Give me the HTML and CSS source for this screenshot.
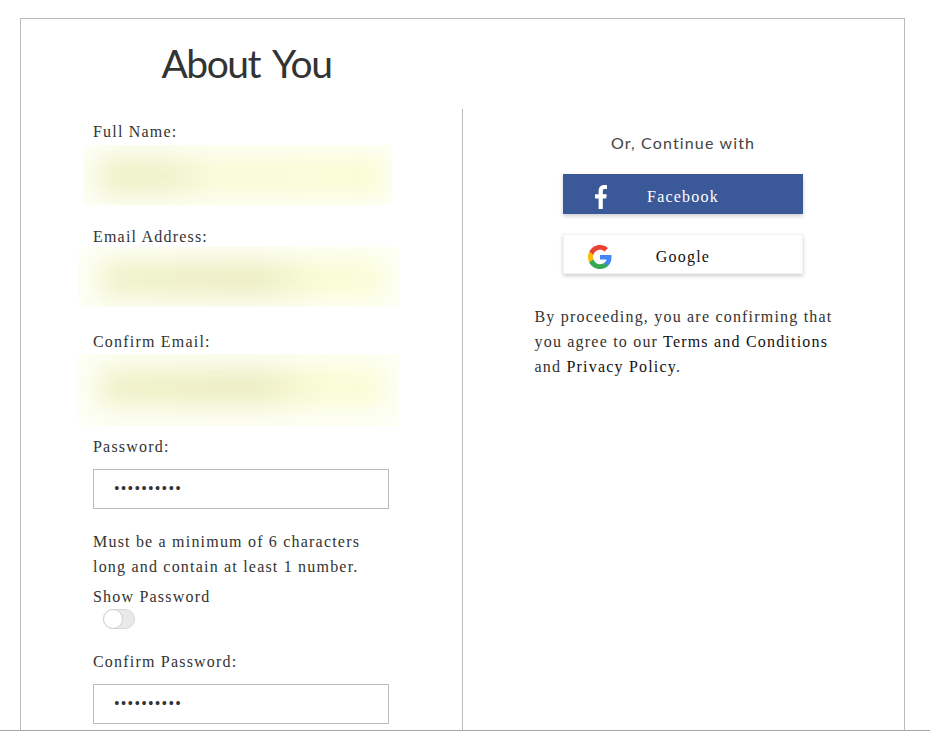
FILE: index.html
```html
<!DOCTYPE html>
<html lang="en">
<head>
    <meta charset="UTF-8">
    <meta name="viewport" content="width=device-width, initial-scale=1.0">
    <title>About You</title>
    <link rel="stylesheet" href="styles.css">
</head>
<body>
    <div class="page">
        <div class="frame">
            <div class="header">
                <h1>About You</h1>
            </div>
            <div class="columns">
                <form class="col-left">
                    <div class="field">
                        <label>Full Name:</label>
                        <div class="slot">
                            <div class="patch patch-name"><div class="smear"></div></div>
                        </div>
                    </div>
                    <div class="field">
                        <label>Email Address:</label>
                        <div class="slot">
                            <div class="patch patch-email"><div class="smear"></div></div>
                        </div>
                    </div>
                    <div class="field">
                        <label>Confirm Email:</label>
                        <div class="slot">
                            <div class="patch patch-confirm"><div class="smear"></div></div>
                        </div>
                    </div>
                    <div class="field field-tight">
                        <label for="password">Password:</label>
                        <input type="password" id="password" value="1234567890">
                    </div>
                    <p class="hint">Must be a minimum of 6 characters long and contain at least 1 number.</p>
                    <div class="show-password">
                        <span class="show-label">Show Password</span>
                        <span class="toggle"><span class="knob"></span></span>
                    </div>
                    <div class="field">
                        <label for="confirm-password">Confirm Password:</label>
                        <input type="password" id="confirm-password" value="1234567890">
                    </div>
                </form>
                <div class="col-right">
                    <p class="or">Or, Continue with</p>
                    <a class="social facebook" href="#">
                        <svg class="fb-icon" viewBox="0 0 12 24" width="12" height="24"><path fill="#fff" d="M3.6 24V13.4H0V9.2h3.6V6.1C3.6 2.3 5.8 0 9.2 0c1.3 0 2.3.1 2.8.2v3.9H9.8c-1.7 0-2 .9-2 2.1v3h4l-.6 4.2H7.8V24z"/></svg>
                        Facebook
                    </a>
                    <a class="social google" href="#">
                        <svg class="g-icon" viewBox="0 0 24 24" width="24" height="24">
                            <path fill="#4285F4" d="M23.5 12.3c0-.9-.1-1.700-.2-2.400H12v4.600h6.500c-.3 1.500-1.100 2.700-2.400 3.600v3h3.900c2.200-2.100 3.500-5.100 3.500-8.800z"/>
                            <path fill="#34A853" d="M12 24c3.200 0 6-1.100 8-2.900l-3.900-3c-1.100.7-2.500 1.200-4.100 1.200-3.100 0-5.800-2.100-6.700-5H1.300v3.100C3.300 21.300 7.300 24 12 24z"/>
                            <path fill="#FBBC05" d="M5.300 14.300c-.3-.7-.4-1.500-.4-2.300s.1-1.600.4-2.300V6.600H1.300C.5 8.200 0 10 0 12s.5 3.800 1.300 5.400z"/>
                            <path fill="#EA4335" d="M12 4.800c1.800 0 3.300.6 4.600 1.800l3.400-3.400C18 1.200 15.200 0 12 0 7.300 0 3.300 2.700 1.300 6.600l4 3.100c.9-2.800 3.600-4.900 6.700-4.900z"/>
                        </svg>
                        Google
                    </a>
                    <p class="terms">By proceeding, you are confirming that you agree to our <a href="#">Terms and Conditions</a> and <a href="#">Privacy Policy</a>.</p>
                </div>
            </div>
        </div>
    </div>
</body>
</html>
```

FILE: styles.css
```css
html, body {
    margin: 0;
    padding: 0;
    background: #fff;
}
body {
    font-family: 'Liberation Serif', 'Times New Roman', serif;
    font-size: 16px;
    line-height: 25px;
    letter-spacing: 1.2px;
    color: #333;
}
.page {
    box-sizing: border-box;
    height: 731px;
    padding: 18px 25px 0 20px;
    border-bottom: 1px solid #a3a7ad;
    overflow: hidden;
}
.frame {
    border: 1px solid #bbb;
    border-bottom: none;
}
.header {
    box-sizing: border-box;
    width: 441px;
    height: 90px;
    padding: 19px 0 0 10px;
    text-align: center;
}
h1 {
    margin: 0;
    font-family: 'Lato', sans-serif;
    font-size: 39px;
    line-height: 50px;
    font-weight: 400;
    letter-spacing: -1.5px;
    word-spacing: 5px;
    color: #333;
}
.columns {
    display: flex;
}
.col-left {
    box-sizing: border-box;
    width: 442px;
    padding: 10px 0 30px 72px;
    border-right: 1px solid #bbb;
}
.col-right {
    flex: 1;
    display: flex;
    flex-direction: column;
    align-items: center;
    padding: 21px 1px 0 0;
}
.field {
    margin-bottom: 30px;
}
.field-tight {
    margin-bottom: 20px;
}
label {
    display: block;
    margin-bottom: 10px;
}
.slot {
    position: relative;
    width: 296px;
    height: 40px;
}
input {
    display: block;
    box-sizing: border-box;
    width: 296px;
    height: 40px;
    padding: 0 20px;
    border: 1px solid #bbb;
    border-radius: 0;
    outline: none;
    font-family: 'Liberation Serif', serif;
    font-size: 16px;
    letter-spacing: 1.2px;
    color: #333;
}
/* redacted values, blurred over the inputs */
.patch {
    position: absolute;
    overflow: hidden;
    background: #fefff6;
}
.smear {
    position: absolute;
    inset: 12px 6px 10px 16px;
    filter: blur(13px);
}
.patch-name {
    top: -9px;
    left: -10px;
    right: -3px;
    bottom: -11px;
}
.patch-name .smear {
    background: linear-gradient(90deg, #eef0c6 0%, #eef0c6 22%, #f8fbd6 40%, #f9fcd2 100%);
}
.patch-email {
    top: -12px;
    left: -15px;
    right: -11px;
    bottom: -8px;
}
.patch-email .smear {
    inset: 14px 16px 10px 22px;
    background: linear-gradient(90deg, #f0f2c8 0%, #ebedc0 55%, #f9fcd2 78%, #f9fcd2 100%);
}
.patch-confirm {
    top: -10px;
    left: -16px;
    right: -10px;
    bottom: -22px;
}
.patch-confirm .smear {
    inset: 14px 16px 20px 22px;
    background: linear-gradient(90deg, #f0f2c8 0%, #ebedc0 55%, #f9fcd2 78%, #f9fcd2 100%);
}
.hint {
    width: 296px;
    margin: 0;
}
.show-password {
    margin: 5px 0 25px;
    height: 40px;
}
.show-label {
    display: block;
    height: 25px;
}
.toggle {
    display: block;
    position: relative;
    box-sizing: border-box;
    width: 32px;
    height: 20px;
    margin-left: 10px;
    border: 1px solid #d8d8d8;
    border-radius: 10px;
    background: #e9e9e9;
}
.knob {
    position: absolute;
    top: -1px;
    left: -1px;
    box-sizing: border-box;
    width: 20px;
    height: 20px;
    border: 1px solid #d0d0d0;
    border-radius: 50%;
    background: #fff;
}
.or {
    margin: 0 0 19px;
    font-family: 'Lato', sans-serif;
    font-size: 16px;
    letter-spacing: 1.15px;
    color: #444;
}
.social {
    position: relative;
    display: block;
    box-sizing: border-box;
    width: 240px;
    height: 40px;
    line-height: 46px;
    text-align: center;
    text-decoration: none;
    box-shadow: 0 2px 4px rgba(0, 0, 0, 0.2);
}
.facebook {
    margin-bottom: 20px;
    background: #3b5998;
    color: #fff;
}
.google {
    margin-bottom: 30px;
    background: #fff;
    border: 1px solid #f2f2f2;
    line-height: 44px;
    color: #111;
}
.fb-icon {
    position: absolute;
    top: 11px;
    left: 32px;
}
.g-icon {
    position: absolute;
    top: 10px;
    left: 24px;
}
.terms {
    width: 298px;
    margin: 0;
    padding-left: 1px;
}
.terms a {
    color: #111;
    text-decoration: none;
}
```
